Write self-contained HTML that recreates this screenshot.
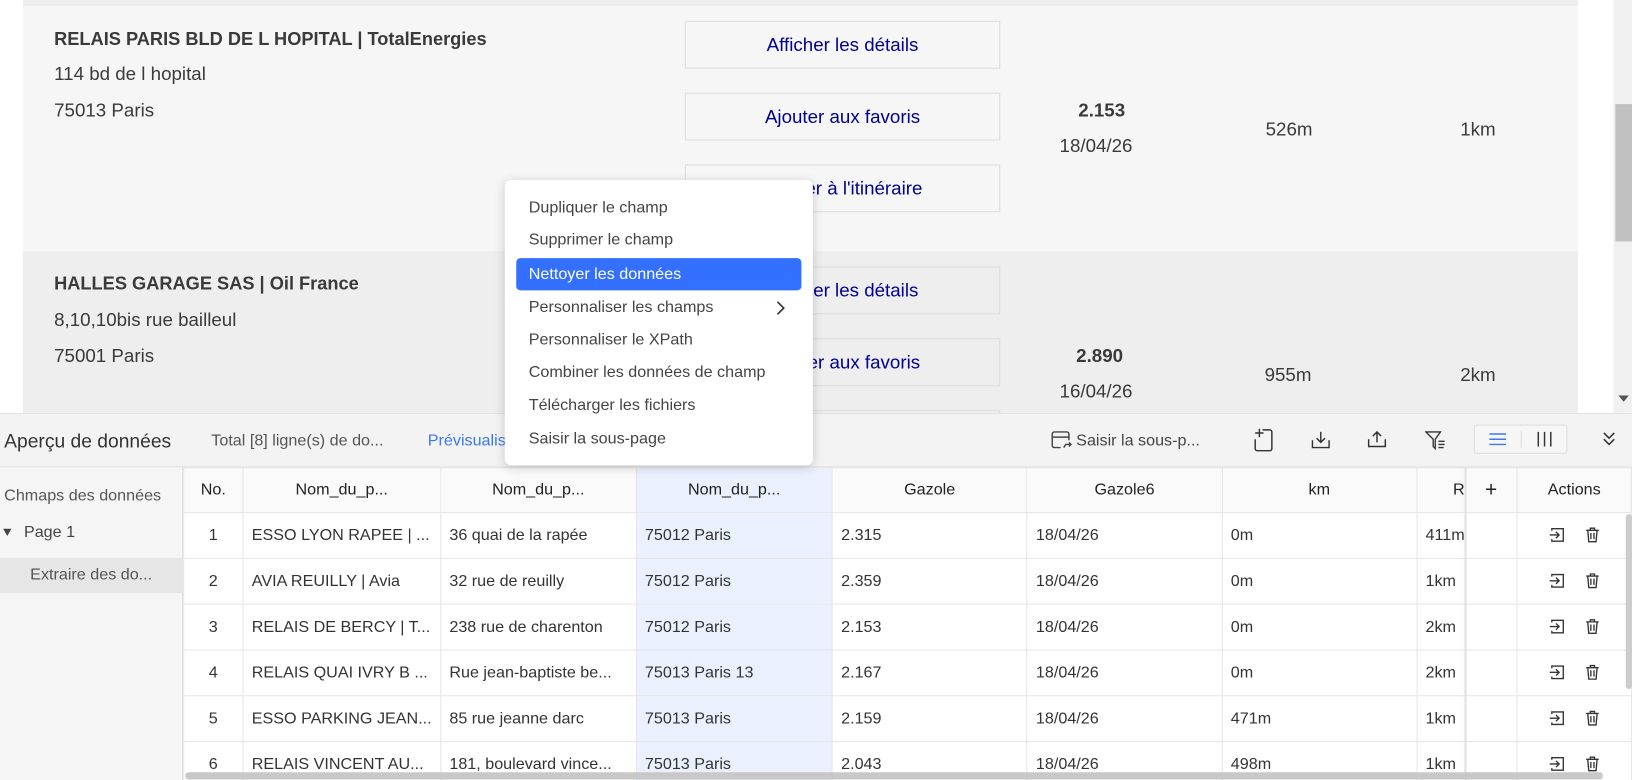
<!DOCTYPE html>
<html><head><meta charset="utf-8"><style>
*{box-sizing:border-box;margin:0;padding:0}
html,body{width:1632px;height:780px;overflow:hidden;background:#fff}
#w{width:1568px;height:750px;transform:scale(1.0408);transform-origin:0 0;position:relative;font-family:"Liberation Sans",sans-serif;color:#333}
.a{position:absolute}
.btn{position:absolute;left:658px;width:303px;height:46px;border:1px solid #ddd;background:#f6f6f6;color:#000091;font-size:18px;text-align:center;line-height:44px}
.t{position:absolute;font-size:18px;color:#3a3a3a;white-space:nowrap}
.b{font-weight:bold}
.mi{position:absolute;left:23px;font-size:15.5px;color:#444;white-space:nowrap}
table{border-collapse:collapse;position:absolute;left:176px;top:449px;table-layout:fixed}
td,th{border:1px solid #e6e6e6;font-size:15.5px;height:44px;padding:0 8px;white-space:nowrap;overflow:hidden;text-align:left;font-weight:normal;color:#333}
th{background:#fafafa;text-align:center;color:#222;height:43px}
.hl{background:#eaf0fe}
.c{text-align:center}
.ac svg{vertical-align:middle;margin:0 9px}
</style></head><body><div id="w">
<div class="a" style="left:0;top:0;width:1550px;height:395px;background:#fff"></div>
<div class="a" style="left:22px;top:0;width:1494px;height:6px;background:#eee"></div>
<div class="a" style="left:22px;top:6px;width:1494px;height:235px;background:#f6f6f6"></div>
<div class="a" style="left:22px;top:241px;width:1494px;height:156px;background:#eee"></div>
<div class="a" style="left:1550px;top:0;width:18px;height:397px;background:#f1f1f1"></div>
<div class="a" style="left:1552px;top:100px;width:16px;height:132px;background:#c1c1c1"></div>
<div class="a" style="left:1555px;top:380px;border-left:5px solid transparent;border-right:5px solid transparent;border-top:6px solid #555"></div>

<div class="t b" style="left:52px;top:27px;font-size:17.5px">RELAIS PARIS BLD DE L HOPITAL | TotalEnergies</div>
<div class="t" style="left:52px;top:61px">114 bd de l hopital</div>
<div class="t" style="left:52px;top:96px">75013 Paris</div>
<div class="btn" style="top:20px">Afficher les détails</div>
<div class="btn" style="top:89px">Ajouter aux favoris</div>
<div class="btn" style="top:158px">Ajouter à l'itinéraire</div>
<div class="t b" style="left:1036px;top:96px">2.153</div>
<div class="t" style="left:1018px;top:130px">18/04/26</div>
<div class="t" style="left:1216px;top:114px">526m</div>
<div class="t" style="left:1403px;top:114px">1km</div>

<div class="t b" style="left:52px;top:262px;font-size:17.5px">HALLES GARAGE SAS | Oil France</div>
<div class="t" style="left:52px;top:297px">8,10,10bis rue bailleul</div>
<div class="t" style="left:52px;top:332px">75001 Paris</div>
<div class="btn" style="top:256px;background:#eee">Afficher les détails</div>
<div class="btn" style="top:325px;background:#eee">Ajouter aux favoris</div>
<div class="btn" style="top:394px;background:#eee"></div>
<div class="t b" style="left:1034px;top:332px">2.890</div>
<div class="t" style="left:1018px;top:366px">16/04/26</div>
<div class="t" style="left:1215px;top:350px">955m</div>
<div class="t" style="left:1403px;top:350px">2km</div>

<div class="a" style="left:0;top:397px;width:1568px;height:353px;background:#fff;border-top:1px solid #ddd"></div>
<div class="a" style="left:0;top:398px;width:1568px;height:51px;background:#f3f3f3;border-bottom:1px solid #e0e0e0"></div>
<div class="t" style="left:4px;top:413px;font-size:18.5px;color:#333">Aperçu de données</div>
<div class="t" style="left:203px;top:415px;font-size:15.5px;color:#555">Total [8] ligne(s) de do...</div>
<div class="t" style="left:411px;top:415px;font-size:15.5px;color:#3a78f2">Prévisualiser</div>
<svg class="a" style="left:1010px;top:414px" width="20" height="18" viewBox="0 0 20 18" fill="none" stroke="#444" stroke-width="1.4"><path d="M9 16H3a2 2 0 0 1-2-2V3a2 2 0 0 1 2-2h12a2 2 0 0 1 2 2v6M1 6h16M12 16l2-3h5M17 11l2 2-2 2"/></svg>
<div class="t" style="left:1034px;top:415px;font-size:15.5px;color:#444">Saisir la sous-p...</div>
<svg class="a" style="left:1204px;top:411px" width="20" height="24" viewBox="0 0 20 24" fill="none" stroke="#333" stroke-width="1.4"><path d="M9 2h7a2 2 0 0 1 2 2v16a2 2 0 0 1-2 2H4a2 2 0 0 1-2-2v-9M6 1v8M2 5h8"/></svg>
<svg class="a" style="left:1259px;top:413px" width="20" height="20" viewBox="0 0 20 20" fill="none" stroke="#333" stroke-width="1.4"><path d="M10 2v10M6 8l4 4 4-4M2 10v7h16v-7"/></svg>
<svg class="a" style="left:1313px;top:412px" width="20" height="20" viewBox="0 0 20 20" fill="none" stroke="#333" stroke-width="1.4"><path d="M10 13V3M6 7l4-4 4 4M2 10v7h16v-7"/></svg>
<svg class="a" style="left:1369px;top:413px" width="20" height="20" viewBox="0 0 20 20" fill="none" stroke="#333" stroke-width="1.3"><path d="M1 2h14l-5 7v9l-2-2V9zM13 11h6M13 14h6M13 17h5"/></svg>
<div class="a" style="left:1416px;top:408px;width:90px;height:28px;border:1px solid #ddd;border-radius:3px;background:#f6f6f6"></div>
<svg class="a" style="left:1430px;top:415px" width="18" height="14"><path d="M1 2h16M1 7h16M1 12h16" stroke="#3a78f2" stroke-width="1.4"/></svg>
<div class="a" style="left:1461px;top:414px;width:1px;height:16px;background:#ddd"></div>
<svg class="a" style="left:1476px;top:414px" width="16" height="16"><path d="M2 1v14M8 1v14M14 1v14" stroke="#333" stroke-width="1.4"/></svg>
<svg class="a" style="left:1539px;top:414px" width="14" height="16" fill="none" stroke="#333" stroke-width="1.5"><path d="M2 2l5 5 5-5M2 8l5 5 5-5"/></svg>

<div class="a" style="left:0;top:449px;width:176px;height:301px;background:#f5f5f5;border-right:1px solid #e0e0e0"></div>
<div class="t" style="left:4px;top:468px;font-size:15.5px;color:#555">Chmaps des données</div>
<div class="a" style="left:3px;top:508px;border-left:4px solid transparent;border-right:4px solid transparent;border-top:7px solid #444"></div>
<div class="t" style="left:23px;top:503px;font-size:15.5px;color:#444">Page 1</div>
<div class="a" style="left:0;top:536px;width:176px;height:34px;background:#e6e6e6"></div>
<div class="t" style="left:29px;top:544px;font-size:15.5px;color:#555">Extraire des do...</div>

<svg width="0" height="0" style="position:absolute"><defs>
<symbol id="en" viewBox="0 0 16 16"><path d="M3 4V2h11v12H3v-2M1 8h9M7 5l3 3-3 3" fill="none" stroke="#333" stroke-width="1.3"/></symbol>
<symbol id="tr" viewBox="0 0 16 16"><path d="M2 3.5h12M6 3.5V1.5h4v2M3.5 3.5l1 11h7l1-11M6.5 6v6M9.5 6v6" fill="none" stroke="#333" stroke-width="1.3"/></symbol>
</defs></svg>
<table>
<colgroup><col style="width:57px"><col style="width:188px"><col style="width:188px"><col style="width:189px"><col style="width:188px"><col style="width:188px"><col style="width:188px"><col style="width:46px"><col style="width:50px"><col style="width:110px"></colgroup>
<tr><th>No.</th><th>Nom_du_p...</th><th>Nom_du_p...</th><th class="hl">Nom_du_p...</th><th>Gazole</th><th>Gazole6</th><th>km</th><th style="text-align:right;padding:0">R</th><th style="font-size:20px">+</th><th>Actions</th></tr>
<tr><td class="c">1</td><td>ESSO LYON RAPEE | ...</td><td>36 quai de la rapée</td><td class="hl">75012 Paris</td><td>2.315</td><td>18/04/26</td><td>0m</td><td style="padding:0 0 0 8px">411m</td><td></td><td class="c ac"><svg width="16" height="16"><use href="#en"/></svg><svg width="16" height="16"><use href="#tr"/></svg></td></tr>
<tr><td class="c">2</td><td>AVIA REUILLY | Avia</td><td>32 rue de reuilly</td><td class="hl">75012 Paris</td><td>2.359</td><td>18/04/26</td><td>0m</td><td>1km</td><td></td><td class="c ac"><svg width="16" height="16"><use href="#en"/></svg><svg width="16" height="16"><use href="#tr"/></svg></td></tr>
<tr><td class="c">3</td><td>RELAIS DE BERCY | T...</td><td>238 rue de charenton</td><td class="hl">75012 Paris</td><td>2.153</td><td>18/04/26</td><td>0m</td><td>2km</td><td></td><td class="c ac"><svg width="16" height="16"><use href="#en"/></svg><svg width="16" height="16"><use href="#tr"/></svg></td></tr>
<tr><td class="c">4</td><td>RELAIS QUAI IVRY B ...</td><td>Rue jean-baptiste be...</td><td class="hl">75013 Paris 13</td><td>2.167</td><td>18/04/26</td><td>0m</td><td>2km</td><td></td><td class="c ac"><svg width="16" height="16"><use href="#en"/></svg><svg width="16" height="16"><use href="#tr"/></svg></td></tr>
<tr><td class="c">5</td><td>ESSO PARKING JEAN...</td><td>85 rue jeanne darc</td><td class="hl">75013 Paris</td><td>2.159</td><td>18/04/26</td><td>471m</td><td>1km</td><td></td><td class="c ac"><svg width="16" height="16"><use href="#en"/></svg><svg width="16" height="16"><use href="#tr"/></svg></td></tr>
<tr><td class="c">6</td><td>RELAIS VINCENT AU...</td><td>181, boulevard vince...</td><td class="hl">75013 Paris</td><td>2.043</td><td>18/04/26</td><td>498m</td><td>1km</td><td></td><td class="c ac"><svg width="16" height="16"><use href="#en"/></svg><svg width="16" height="16"><use href="#tr"/></svg></td></tr>
</table>
<div class="a" style="left:1408px;top:449px;width:1px;height:301px;background:#ddd;box-shadow:-2px 0 4px rgba(0,0,0,.06)"></div>
<div class="a" style="left:1562px;top:494px;width:6px;height:168px;background:#ccc;border-radius:3px"></div>
<div class="a" style="left:178px;top:742px;width:1362px;height:7px;background:#c8c8c8;border-radius:3px"></div>

<div class="a" style="left:485px;top:173px;width:296px;height:274px;background:#fff;border-radius:6px;box-shadow:0 2px 10px rgba(0,0,0,.18)">
<div class="mi" style="top:18px">Dupliquer le champ</div>
<div class="mi" style="top:49px">Supprimer le champ</div>
<div class="a" style="left:11px;top:75px;width:274px;height:31px;background:#3370ff;border-radius:4px"></div>
<div class="mi" style="top:82px;color:#fff">Nettoyer les données</div>
<div class="mi" style="top:114px">Personnaliser les champs</div>
<svg class="a" style="left:260px;top:116px" width="10" height="14" fill="none" stroke="#333" stroke-width="1.6"><path d="M2 1l6 6-6 6"/></svg>
<div class="mi" style="top:145px">Personnaliser le XPath</div>
<div class="mi" style="top:176px">Combiner les données de champ</div>
<div class="mi" style="top:208px">Télécharger les fichiers</div>
<div class="mi" style="top:240px">Saisir la sous-page</div>
</div>
</div></body></html>
